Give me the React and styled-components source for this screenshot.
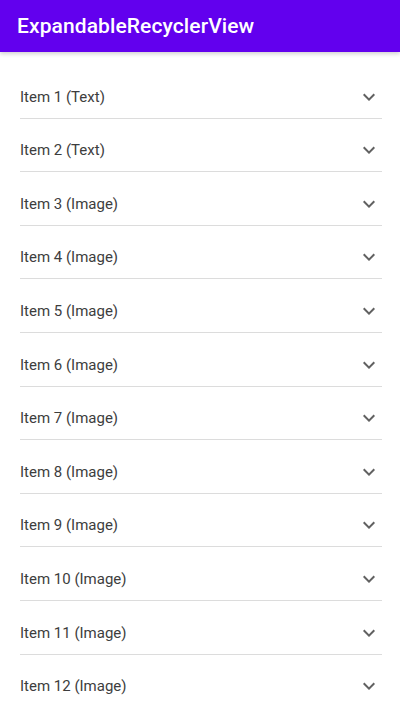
import React from "react";
import styled, { createGlobalStyle } from "styled-components";

const GlobalStyle = createGlobalStyle`
	html, body {
		margin: 0;
		padding: 0;
		background: #fff;
		font-family: Roboto, "Noto Sans", sans-serif;
	}
`;

const Screen = styled.div`
	width: 400px;
	height: 719px;
	overflow: hidden;
	background: #fff;
`;

const AppBar = styled.header`
	height: 52px;
	background-color: #6200ee;
	display: flex;
	align-items: center;
	padding: 0 17px;
	box-shadow: 0 2px 4px rgba(0, 0, 0, 0.18);
	position: relative;
`;

const Title = styled.h1`
	margin: 0;
	color: #fff;
	font-size: 21px;
	font-weight: 500;
	letter-spacing: 0.1px;
`;

const List = styled.ul`
	list-style: none;
	margin: 0 18px 0 20px;
	padding: 13px 0 0;
`;

const Row = styled.li`
	display: flex;
	align-items: center;
	justify-content: space-between;
	height: 42px;
	padding-top: 10.6px;
	border-bottom: 1px solid ${(p) => (p.$last ? "transparent" : "#dcdcdc")};
`;

const Label = styled.span`
	font-size: 15px;
	color: #3d3d3d;
`;

const Chevron = styled.svg`
	width: 24px;
	height: 24px;
	margin-right: 1px;
	fill: #616161;
`;

const items = [
	"Item 1 (Text)",
	"Item 2 (Text)",
	...Array.from({ length: 10 }, (_, i) => `Item ${i + 3} (Image)`),
];

const App = () => (
	<Screen>
		<GlobalStyle />
		<AppBar>
			<Title>ExpandableRecyclerView</Title>
		</AppBar>
		<List>
			{items.map((label, i) => (
				<Row key={label} $last={i === items.length - 1}>
					<Label>{label}</Label>
					<Chevron viewBox="0 0 24 24">
						<path d="M16.59 8.59L12 13.17 7.41 8.59 6 10l6 6 6-6z" />
					</Chevron>
				</Row>
			))}
		</List>
	</Screen>
);

export default App;
